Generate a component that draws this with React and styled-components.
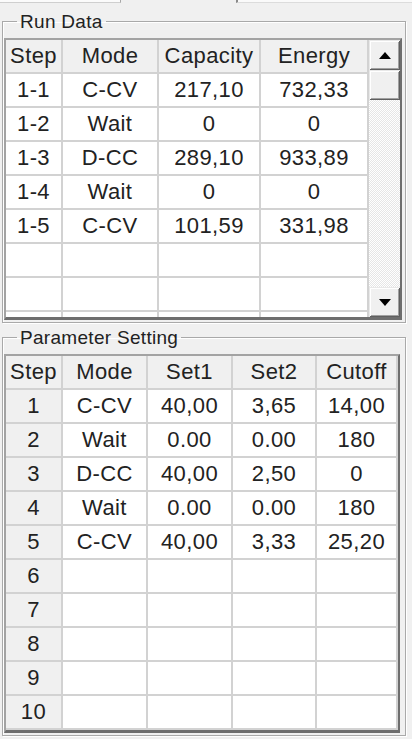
import React from "react";
import styled, { createGlobalStyle } from "styled-components";

const Global = createGlobalStyle`
  html, body { margin: 0; padding: 0; background: #f0f0f0; }
  body { font-family: "Liberation Sans", Arial, sans-serif; color: #1a1a1a; }
  * { box-sizing: border-box; }
`;

const Page = styled.div`
  width: 412px;
  height: 739px;
  overflow: hidden;
  background: #f0f0f0;
  display: flex;
  flex-direction: column;
`;

const TopStrip = styled.div`
  height: 6px;
  display: flex;
  align-items: flex-start;
`;

const TopLeftPiece = styled.div`
  width: 121px;
  height: 3px;
  background: #fbfbfb;
  border-bottom: 1px solid #cfcfcf;
  border-right: 1px solid #a8a8a8;
`;

const TopRightPiece = styled.div`
  margin-left: 115px;
  flex: 1;
  height: 3px;
  border-left: 2px solid #8a8a8a;
  background: #fafafa;
  border-bottom: 1px solid #dcdcdc;
`;

const Group = styled.fieldset`
  margin: ${(p) => p.$mt}px 0 0 2px;
  width: 404px;
  min-width: 0;
  padding: ${(p) => p.$pt}px 0 2px 1px;
  border: 1px solid #a9a9a9;
  box-shadow: inset 1px 1px 0 #fff, 1px 1px 0 #fff;
`;

const Legend = styled.legend`
  margin-left: 13px;
  padding: 0 3px;
  font-size: 19px;
  line-height: 19px;
  color: #222;
  letter-spacing: 0.3px;
`;

const Frame = styled.div`
  display: flex;
  width: ${(p) => p.$w}px;
  border-style: solid;
  border-width: 2px 2px 3px 2px;
  border-color: #a3a3a3 #6e6e6e #6e6e6e #a3a3a3;
  background: #fff;
`;

const Viewport = styled.div`
  height: ${(p) => (p.$h ? `${p.$h}px` : "auto")};
  overflow: hidden;
  display: flex;
  flex-direction: column;
`;

const Row = styled.div`
  display: grid;
  grid-template-columns: ${(p) => p.$cols};
  flex: none;
`;

const Cell = styled.div`
  height: 34px;
  border-right: 2px solid #d2d2d2;
  border-bottom: 2px solid #d2d2d2;
  background: ${(p) => (p.$gray ? "#f0f0f0" : "#ffffff")};
  display: flex;
  align-items: center;
  justify-content: center;
  font-size: 22px;
  line-height: 1;
  letter-spacing: 0.4px;
  color: #222;
  white-space: nowrap;
  overflow: hidden;
`;

const ScrollBar = styled.div`
  width: 31px;
  display: flex;
  flex-direction: column;
  background-color: #f4f4f4;
  background-image: repeating-conic-gradient(#ffffff 0 25%, #e6e6e6 0 50%);
  background-size: 2px 2px;
`;

const SbButton = styled.div`
  height: 30px;
  flex: none;
  background: #f0f0f0;
  box-shadow: inset 1px 1px 0 #e8e8e8, inset -1px -1px 0 #5f5f5f,
    inset 2px 2px 0 #ffffff, inset -2px -2px 0 #a0a0a0;
  display: flex;
  align-items: center;
  justify-content: center;
`;

const Track = styled.div`
  flex: 1;
`;

const Arrow = ({ down }) => (
  <svg width="12" height="7" viewBox="0 0 12 7">
    {down ? (
      <polygon points="0,0 12,0 6,7" fill="#000" />
    ) : (
      <polygon points="0,7 12,7 6,0" fill="#000" />
    )}
  </svg>
);

const runCols = "57px 96px 102px 108px";
const paramCols = "57px 85px 85px 84px 81px";

const runHead = ["Step", "Mode", "Capacity", "Energy"];
const runRows = [
  ["1-1", "C-CV", "217,10", "732,33"],
  ["1-2", "Wait", "0", "0"],
  ["1-3", "D-CC", "289,10", "933,89"],
  ["1-4", "Wait", "0", "0"],
  ["1-5", "C-CV", "101,59", "331,98"],
  ["", "", "", ""],
  ["", "", "", ""],
  ["", "", "", ""],
];

const paramHead = ["Step", "Mode", "Set1", "Set2", "Cutoff"];
const paramRows = [
  ["1", "C-CV", "40,00", "3,65", "14,00"],
  ["2", "Wait", "0.00", "0.00", "180"],
  ["3", "D-CC", "40,00", "2,50", "0"],
  ["4", "Wait", "0.00", "0.00", "180"],
  ["5", "C-CV", "40,00", "3,33", "25,20"],
  ["6", "", "", "", ""],
  ["7", "", "", "", ""],
  ["8", "", "", "", ""],
  ["9", "", "", "", ""],
  ["10", "", "", "", ""],
];

export default function App() {
  return (
    <Page>
      <Global />
      <TopStrip>
        <TopLeftPiece />
        <TopRightPiece />
      </TopStrip>

      <Group $mt={6} $pt={7}>
        <Legend>Run Data</Legend>
        <Frame $w={398}>
          <Viewport $h={277}>
            <Row $cols={runCols}>
              {runHead.map((h) => (
                <Cell key={h} $gray>
                  {h}
                </Cell>
              ))}
            </Row>
            {runRows.map((r, i) => (
              <Row key={i} $cols={runCols}>
                {r.map((c, j) => (
                  <Cell key={j}>{c}</Cell>
                ))}
              </Row>
            ))}
          </Viewport>
          <ScrollBar>
            <SbButton>
              <Arrow />
            </SbButton>
            <SbButton />
            <Track />
            <SbButton>
              <Arrow down />
            </SbButton>
          </ScrollBar>
        </Frame>
      </Group>

      <Group $mt={5} $pt={7}>
        <Legend>Parameter Setting</Legend>
        <Frame $w={396}>
          <Viewport>
            <Row $cols={paramCols}>
              {paramHead.map((h) => (
                <Cell key={h} $gray>
                  {h}
                </Cell>
              ))}
            </Row>
            {paramRows.map((r, i) => (
              <Row key={i} $cols={paramCols}>
                {r.map((c, j) => (
                  <Cell key={j} $gray={j === 0}>
                    {c}
                  </Cell>
                ))}
              </Row>
            ))}
          </Viewport>
        </Frame>
      </Group>
    </Page>
  );
}
